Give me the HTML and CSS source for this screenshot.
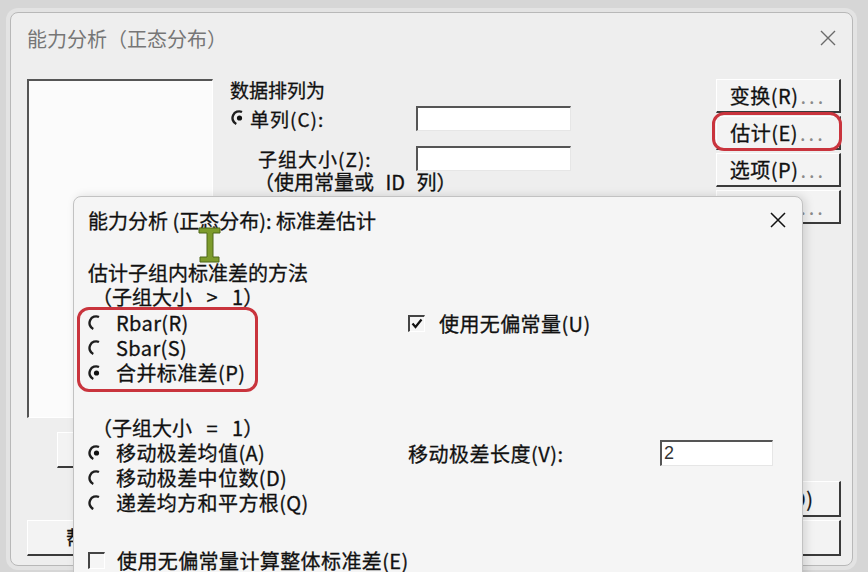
FILE: index.html
```html
<!DOCTYPE html>
<html lang="zh-CN">
<head>
    <meta charset="UTF-8">
    <title>能力分析（正态分布）</title>
    <link rel="stylesheet" href="styles.css">
</head>
<body>
<div class="desk">
    <div class="win main">
        <div class="titlebar">
            <span class="title">能力分析（正态分布）</span>
            <svg class="close" width="18" height="18" viewBox="0 0 18 18"><path d="M2 2L16 16M16 2L2 16" stroke="#6a6a6a" stroke-width="1.4"/></svg>
        </div>
        <div class="main-body">
            <div class="left-col">
                <div class="listbox"></div>
                <div class="btn btn-select">选择</div>
                <div class="btn btn-help">帮助</div>
            </div>
            <div class="form">
                <div class="caption">数据排列为</div>
                <div class="row">
                    <span class="lbl">
                        <svg class="radio" width="16" height="16" viewBox="0 0 16 16"><path d="M11 2A6.4 6.4 0 0 0 5.3 14" fill="none" stroke="#1e1e1e" stroke-width="2.4"/><circle cx="8.5" cy="8" r="2.6" fill="#111"/></svg>
                        单列(C):
                    </span>
                    <span class="field"></span>
                </div>
                <div class="row row-sub">
                    <span class="lbl indent">子组大小(Z):</span>
                    <span class="field"></span>
                </div>
                <div class="note">（使用常量或 ID 列）</div>
            </div>
            <div class="side">
                <div class="btn">变换(R)<span class="dots">...</span></div>
                <div class="btn marked">估计(E)<span class="dots">...</span></div>
                <div class="btn">选项(P)<span class="dots">...</span></div>
                <div class="btn">存储(S)<span class="dots">...</span></div>
                <div class="btn tall ok">确定(O)</div>
                <div class="btn tall">取消</div>
            </div>
        </div>
    </div>

    <div class="win sub">
        <div class="sub-title">
            <span>能力分析 (正态分布): 标准差估计</span>
            <svg class="close" width="18" height="18" viewBox="0 0 18 18"><path d="M2 2L16 16M16 2L2 16" stroke="#111" stroke-width="1.5"/></svg>
        </div>
        <div class="sub-body">
            <div class="col-a">
                <div class="heading">估计子组内标准差的方法</div>
                <div class="note2">（子组大小 &gt; 1）</div>
                <div class="group">
                    <div class="opt">
                        <svg class="radio" width="16" height="16" viewBox="0 0 16 16"><path d="M11 2A6.4 6.4 0 0 0 5.3 14" fill="none" stroke="#1e1e1e" stroke-width="2.4"/></svg>
                        <span>Rbar(R)</span>
                    </div>
                    <div class="opt">
                        <svg class="radio" width="16" height="16" viewBox="0 0 16 16"><path d="M11 2A6.4 6.4 0 0 0 5.3 14" fill="none" stroke="#1e1e1e" stroke-width="2.4"/></svg>
                        <span>Sbar(S)</span>
                    </div>
                    <div class="opt">
                        <svg class="radio" width="16" height="16" viewBox="0 0 16 16"><path d="M11 2A6.4 6.4 0 0 0 5.3 14" fill="none" stroke="#1e1e1e" stroke-width="2.4"/><circle cx="8.5" cy="8" r="2.6" fill="#111"/></svg>
                        <span>合并标准差(P)</span>
                    </div>
                </div>
                <div class="note2 gap">（子组大小 = 1）</div>
                <div class="opt">
                    <svg class="radio" width="16" height="16" viewBox="0 0 16 16"><path d="M11 2A6.4 6.4 0 0 0 5.3 14" fill="none" stroke="#1e1e1e" stroke-width="2.4"/><circle cx="8.5" cy="8" r="2.6" fill="#111"/></svg>
                    <span>移动极差均值(A)</span>
                </div>
                <div class="opt">
                    <svg class="radio" width="16" height="16" viewBox="0 0 16 16"><path d="M11 2A6.4 6.4 0 0 0 5.3 14" fill="none" stroke="#1e1e1e" stroke-width="2.4"/></svg>
                    <span>移动极差中位数(D)</span>
                </div>
                <div class="opt">
                    <svg class="radio" width="16" height="16" viewBox="0 0 16 16"><path d="M11 2A6.4 6.4 0 0 0 5.3 14" fill="none" stroke="#1e1e1e" stroke-width="2.4"/></svg>
                    <span>递差均方和平方根(Q)</span>
                </div>
                <div class="opt check-last">
                    <span class="checkbox"></span>
                    <span>使用无偏常量计算整体标准差(E)</span>
                </div>
            </div>
            <div class="col-b">
                <div class="opt check-top">
                    <span class="checkbox">
                        <svg width="14" height="14" viewBox="0 0 14 14"><path d="M2.5 6.5L5.5 10L11.5 2.5" fill="none" stroke="#111" stroke-width="2.2"/></svg>
                    </span>
                    <span>使用无偏常量(U)</span>
                </div>
                <div class="len-row">
                    <span class="len-lbl">移动极差长度(V):</span>
                    <span class="field small">2</span>
                </div>
            </div>
        </div>
    </div>

    <svg class="cursor" width="24" height="38" viewBox="0 0 24 38">
        <path d="M1 2H22V7H15V31H21V36H2V31H9V7H1Z" fill="#7d9b2c" stroke="#4f6718" stroke-width="1"/>
    </svg>
</div>
</body>
</html>
```

FILE: styles.css
```css
html, body {
    margin: 0;
    width: 868px;
    height: 572px;
    overflow: hidden;
    font-family: "Noto Sans CJK SC", "Noto Sans", sans-serif;
    color: #111;
}
.desk {
    position: relative;
    width: 868px;
    height: 572px;
    overflow: hidden;
    background: #d6d6d6;
}
.win {
    position: absolute;
    box-sizing: border-box;
    -webkit-text-stroke: 0.3px #111;
}
.main {
    left: 10px;
    top: 12px;
    width: 843px;
    height: 554px;
    background: #eeeeee;
    border: 1px solid #b8b8b8;
    border-radius: 8px;
    box-shadow: 0 0 0 4px #e3e3e3;
    display: flex;
    flex-direction: column;
    font-size: 19px;
}
.titlebar {
    height: 50px;
    display: flex;
    align-items: center;
    justify-content: space-between;
    padding: 0 15px 0 16px;
}
.title {
    color: #767676;
    font-size: 20px;
    -webkit-text-stroke: 0;
}
.main-body {
    flex: 1;
    display: flex;
    gap: 17px;
    padding: 16px 11px 9px 16px;
}
.left-col {
    width: 186px;
    display: flex;
    flex-direction: column;
}
.listbox {
    height: 339px;
    box-sizing: border-box;
    background: #fbfbfb;
    border-top: 2px solid #555;
    border-left: 2px solid #555;
    border-right: 1px solid #fff;
    border-bottom: 1px solid #fff;
}
.btn {
    position: relative;
    box-sizing: border-box;
    height: 34px;
    display: flex;
    align-items: center;
    justify-content: center;
    background: #f3f3f3;
    border-top: 1px solid #fff;
    border-left: 1px solid #fff;
    border-right: 2px solid #3a3a3a;
    border-bottom: 2px solid #3a3a3a;
    white-space: nowrap;
    font-size: 20px;
    letter-spacing: 0.5px;
}
.dots {
    color: #8a8a8a;
    letter-spacing: 3px;
    -webkit-text-stroke: 0;
    margin-left: 2px;
}
.btn-select {
    margin: 14px 0 0 30px;
    width: 110px;
    height: 36px;
}
.btn-help {
    margin-top: auto;
    width: 120px;
    height: 36px;
}
.form {
    flex: 1;
    display: flex;
    flex-direction: column;
}
.caption {
    line-height: 22px;
}
.row {
    display: flex;
    align-items: center;
    height: 30px;
    margin-top: 2px;
}
.row-sub {
    margin-top: 10px;
}
.lbl {
    width: 186px;
    display: flex;
    align-items: center;
    gap: 3px;
    padding-left: 1px;
    box-sizing: border-box;
    letter-spacing: 1px;
}
.lbl.indent {
    padding-left: 28px;
}
.radio {
    flex-shrink: 0;
}
.field {
    box-sizing: border-box;
    width: 155px;
    height: 25px;
    background: #fff;
    border-top: 2px solid #555;
    border-left: 2px solid #555;
    border-right: 1px solid #e6e6e6;
    border-bottom: 1px solid #e6e6e6;
}
.note {
    line-height: 20px;
    margin-top: -1px;
    padding-left: 24px;
    font-size: 20px;
    word-spacing: 7px;
}
.side {
    width: 125px;
    display: flex;
    flex-direction: column;
    gap: 3px;
}
.btn.tall {
    height: 36px;
}
.btn.ok {
    margin-top: auto;
}
.marked::after {
    content: "";
    position: absolute;
    top: -5px;
    left: -5px;
    right: -3px;
    bottom: -3px;
    border: 3px solid #c9343d;
    border-radius: 12px;
}

.sub {
    left: 73px;
    top: 196px;
    width: 730px;
    height: 420px;
    background: #f5f5f5;
    border: 1px solid #c2c2c2;
    border-radius: 8px 8px 0 0;
    box-shadow: 3px 0 10px rgba(0, 0, 0, 0.13);
    font-size: 20px;
}
.sub-title {
    height: 46px;
    display: flex;
    align-items: center;
    justify-content: space-between;
    padding: 0 15px 0 14px;
    font-size: 20px;
}
.sub-body {
    display: flex;
    padding: 18px 0 0 14px;
}
.col-a {
    width: 320px;
    display: flex;
    flex-direction: column;
}
.heading {
    line-height: 24px;
}
.note2 {
    line-height: 24px;
    font-size: 20px;
    padding-left: 4px;
    word-spacing: 10px;
    white-space: pre;
}
.note2.gap {
    margin-top: 24px;
}
.group {
    box-sizing: border-box;
    width: 181px;
    margin: -2px 0 0 -11px;
    padding: 0 0 4px 8px;
    border: 3px solid #c9343d;
    border-radius: 12px;
}
.opt {
    display: flex;
    align-items: center;
    height: 25px;
    gap: 12px;
    white-space: nowrap;
    letter-spacing: 0.4px;
}
.check-last {
    margin-top: 33px;
    height: 24px;
    gap: 12px;
}
.checkbox {
    flex-shrink: 0;
    box-sizing: border-box;
    width: 17px;
    height: 17px;
    display: flex;
    align-items: center;
    justify-content: center;
    border-top: 2px solid #444;
    border-left: 2px solid #444;
    border-right: 1px solid #fff;
    border-bottom: 1px solid #fff;
}
.col-b {
    display: flex;
    flex-direction: column;
}
.check-top {
    margin-top: 50px;
    height: 24px;
    gap: 14px;
}
.len-row {
    display: flex;
    align-items: center;
    height: 26px;
    margin-top: 105px;
}
.len-lbl {
    width: 252px;
    letter-spacing: 0.5px;
}
.field.small {
    width: 113px;
    height: 26px;
    font-family: "Liberation Sans", sans-serif;
    font-size: 18px;
    line-height: 22px;
    padding-left: 2px;
    color: #333;
    -webkit-text-stroke: 0;
}
.cursor {
    position: absolute;
    left: 198px;
    top: 226px;
}
```
